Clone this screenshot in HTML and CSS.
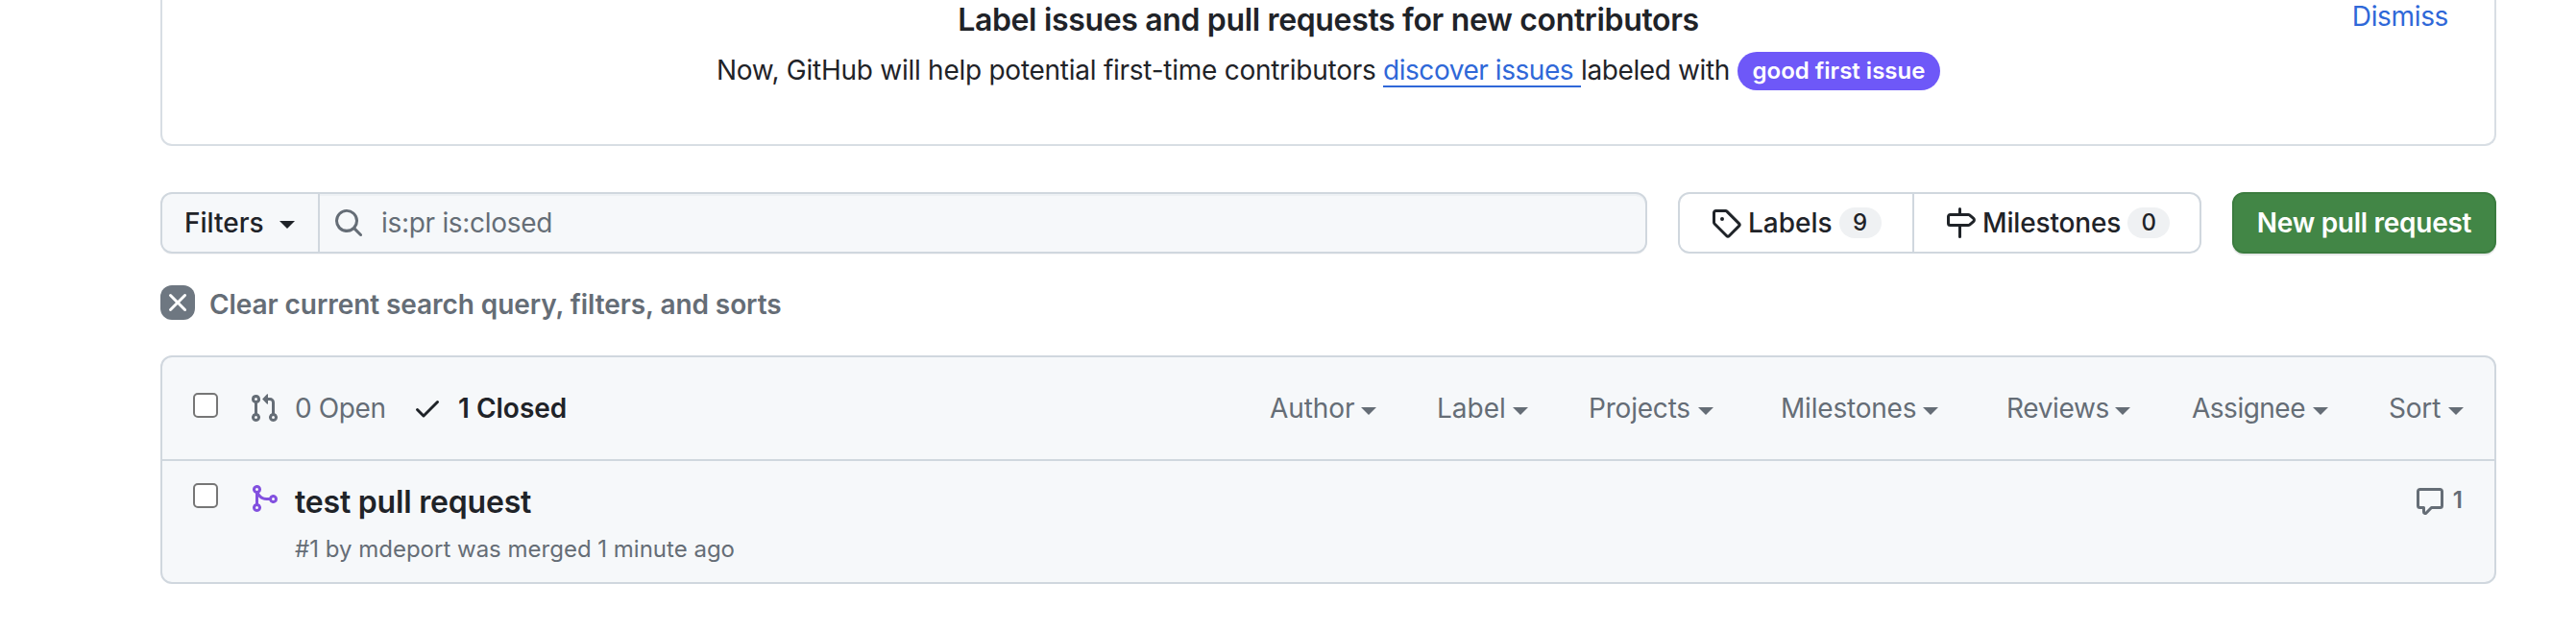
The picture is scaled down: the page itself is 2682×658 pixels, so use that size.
FILE: index.html
```
<!DOCTYPE html>
<html lang="en">
<head>
<meta charset="utf-8">
<title>Pull requests</title>
<link rel="stylesheet" href="styles.css">
</head>
<body>
<main class="page">
  <section class="banner">
    <a class="dismiss">Dismiss</a>
    <h2 class="banner-title">Label issues and pull requests for new contributors</h2>
    <p class="banner-text"><span class="lead">Now, GitHub will help potential first-time contributors</span><a class="link">discover issues </a><span class="labeled">labeled with</span><span class="pill">good first issue</span></p>
  </section>

  <div class="toolbar">
    <div class="search">
      <button class="filters"><span>Filters</span><i class="caret"></i></button>
      <div class="query">
        <svg class="icon" viewBox="0 0 16 16"><path d="M10.68 11.74a6 6 0 0 1-7.922-8.982 6 6 0 0 1 8.982 7.922l3.04 3.04a.749.749 0 0 1-.326 1.275.749.749 0 0 1-.734-.215ZM11.5 7a4.499 4.499 0 1 0-8.997 0A4.499 4.499 0 0 0 11.5 7Z"/></svg>
        <span class="query-text">is:pr is:closed</span>
      </div>
    </div>
    <nav class="subnav">
      <a class="subnav-item labels"><svg class="icon" viewBox="0 0 16 16"><path d="M1 7.775V2.75C1 1.784 1.784 1 2.75 1h5.025c.464 0 .91.184 1.238.513l6.25 6.25a1.75 1.75 0 0 1 0 2.474l-5.026 5.026a1.75 1.75 0 0 1-2.474 0l-6.25-6.25A1.752 1.752 0 0 1 1 7.775Zm1.5 0c0 .066.026.13.073.177l6.25 6.25a.25.25 0 0 0 .354 0l5.025-5.025a.25.25 0 0 0 0-.354l-6.25-6.25a.25.25 0 0 0-.177-.073H2.75a.25.25 0 0 0-.25.25ZM6 5a1 1 0 1 1 0 2 1 1 0 0 1 0-2Z"/></svg><span class="subnav-text">Labels</span><span class="counter">9</span></a>
      <a class="subnav-item milestones"><svg class="icon" viewBox="0 0 16 16"><path d="M7.75 0a.75.75 0 0 1 .75.75V3h3.634c.414 0 .814.147 1.13.414l2.07 1.75a1.75 1.75 0 0 1 0 2.672l-2.07 1.75a1.75 1.75 0 0 1-1.13.414H8.5v5.25a.75.75 0 0 1-1.5 0V10H2.75A1.75 1.75 0 0 1 1 8.25v-3.5C1 3.784 1.784 3 2.75 3H7V.75A.75.75 0 0 1 7.75 0Zm4.384 8.5a.25.25 0 0 0 .161-.06l2.07-1.75a.248.248 0 0 0 0-.38l-2.07-1.75a.25.25 0 0 0-.161-.06H2.75a.25.25 0 0 0-.25.25v3.5c0 .138.112.25.25.25h9.384Z"/></svg><span class="subnav-text">Milestones</span><span class="counter">0</span></a>
    </nav>
    <button class="primary">New pull request</button>
  </div>

  <a class="clear"><span class="clear-icon"><svg class="icon" viewBox="0 0 16 16"><path d="M3.72 3.72a.75.75 0 0 1 1.06 0L8 6.94l3.22-3.22a.749.749 0 0 1 1.275.326.749.749 0 0 1-.215.734L9.06 8l3.22 3.22a.749.749 0 0 1-.326 1.275.749.749 0 0 1-.734-.215L8 9.06l-3.22 3.22a.751.751 0 0 1-1.042-.018.751.751 0 0 1-.018-1.042L6.94 8 3.72 4.78a.75.75 0 0 1 0-1.06Z"/></svg></span><span class="clear-text">Clear current search query, filters, and sorts</span></a>

  <section class="list">
    <header class="list-header">
      <span class="box"></span>
      <a class="state open"><svg class="icon" viewBox="0 0 16 16"><path d="M1.5 3.25a2.25 2.25 0 1 1 3 2.122v5.256a2.251 2.251 0 1 1-1.5 0V5.372A2.25 2.25 0 0 1 1.5 3.25Zm5.677-.177L9.573.677A.25.25 0 0 1 10 .854V2.5h1A2.5 2.5 0 0 1 13.5 5v5.628a2.251 2.251 0 1 1-1.5 0V5a1 1 0 0 0-1-1h-1v1.646a.25.25 0 0 1-.427.177L7.177 3.427a.25.25 0 0 1 0-.354ZM3.75 2.5a.75.75 0 1 0 0 1.5.75.75 0 0 0 0-1.5Zm0 9.5a.75.75 0 1 0 0 1.5.75.75 0 0 0 0-1.5Zm8.25.75a.75.75 0 1 0 1.5 0 .75.75 0 0 0-1.5 0Z"/></svg><span class="state-text">0 Open</span></a>
      <a class="state closed"><svg class="icon" viewBox="0 0 16 16"><path d="M13.78 4.22a.75.75 0 0 1 0 1.06l-7.25 7.25a.75.75 0 0 1-1.06 0L2.22 9.28a.751.751 0 0 1 .018-1.042.751.751 0 0 1 1.042-.018L6 10.94l6.72-6.72a.75.75 0 0 1 1.06 0Z"/></svg><span class="state-text">1 Closed</span></a>
      <nav class="menus">
        <a class="menu author"><span>Author</span><i class="caret"></i></a>
        <a class="menu label"><span>Label</span><i class="caret"></i></a>
        <a class="menu projects"><span>Projects</span><i class="caret"></i></a>
        <a class="menu miles"><span>Milestones</span><i class="caret"></i></a>
        <a class="menu reviews"><span>Reviews</span><i class="caret"></i></a>
        <a class="menu assignee"><span>Assignee</span><i class="caret"></i></a>
        <a class="menu sort"><span>Sort</span><i class="caret"></i></a>
      </nav>
    </header>
    <article class="row">
      <span class="box"></span>
      <svg class="icon merged" viewBox="0 0 16 16"><path d="M5.45 5.154A4.25 4.25 0 0 0 9.25 7.5h1.378a2.251 2.251 0 1 1 0 1.5H9.25A5.734 5.734 0 0 1 5 7.123v3.505a2.25 2.25 0 1 1-1.5 0V5.372a2.25 2.25 0 1 1 1.95-.218ZM4.25 13.5a.75.75 0 1 0 0-1.5.75.75 0 0 0 0 1.5Zm8.5-4.5a.75.75 0 1 0 0-1.5.75.75 0 0 0 0 1.5ZM5 3.25a.75.75 0 1 0 0 .005V3.25Z"/></svg>
      <div class="info">
        <h3 class="title">test pull request</h3>
        <p class="meta">#1 by mdeport was merged 1 minute ago</p>
      </div>
      <a class="comments"><svg class="icon" viewBox="0 0 16 16"><path d="M1 2.75C1 1.784 1.784 1 2.75 1h10.5c.966 0 1.75.784 1.75 1.75v7.5A1.75 1.75 0 0 1 13.25 12H9.06l-2.573 2.573A1.458 1.458 0 0 1 4 13.543V12H2.75A1.75 1.75 0 0 1 1 10.25Zm1.75-.25a.25.25 0 0 0-.25.25v7.5c0 .138.112.25.25.25h2a.75.75 0 0 1 .75.75v2.19l2.72-2.72a.749.749 0 0 1 .53-.22h4.5a.25.25 0 0 0 .25-.25v-7.5a.25.25 0 0 0-.25-.25Z"/></svg><span class="count">1</span></a>
    </article>
  </section>
</main>
</body>
</html>
```
FILE: styles.css
```
* { box-sizing: border-box; }
body {
  margin: 0;
  background: #fff;
  color: #1f2328;
  font: 400 28px/42px Inter, "Liberation Sans", sans-serif;
  white-space: nowrap;
}
h2, h3, p { margin: 0; }
a { color: inherit; text-decoration: none; }
button { margin: 0; font: inherit; color: inherit; }
.page { width: 2432px; margin-left: 167px; display: flex; flex-direction: column; }
.icon { display: block; width: 32px; height: 32px; flex: none; fill: currentColor; }

.banner {
  position: relative;
  height: 152px;
  border: 2px solid #d8dee4;
  border-top: 0;
  border-radius: 0 0 12px 12px;
  text-align: center;
}
.dismiss { position: absolute; top: -4px; right: 48px; color: #2f68d8; letter-spacing: -.35px; }
.banner-title { font-size: 32px; line-height: 42px; font-weight: 600; letter-spacing: -.34px; }
.banner-text { display: flex; padding-left: 577px; height: 42px; margin-top: 10px; letter-spacing: -.26px; }
.lead { width: 694px; text-align: left; }
.link { width: 206px; height: 39px; text-align: left; color: #2f68d8; border-bottom: 2px solid #2f68d8; letter-spacing: -.45px; white-space: pre; }
.labeled { width: 163px; text-align: left; letter-spacing: -.38px; }
.pill { width: 211px; height: 40px; margin-top: 2px; border-radius: 20px; background: #6e58f8; color: #fff; font-size: 24px; line-height: 40px; font-weight: 600; letter-spacing: 0; }

.toolbar { display: flex; height: 64px; margin-top: 48px; }
.search { display: flex; width: 1548px; border: 2px solid #d0d7de; border-radius: 12px; background: #f6f8fa; box-shadow: 0 1px 0 rgba(31,35,40,.04); }
.filters { display: flex; align-items: center; width: 164px; padding: 0 0 0 23px; border: 0; border-right: 2px solid #d0d7de; background: none; font-weight: 500; }
.caret { display: block; width: 0; border: 8px solid transparent; border-bottom: 0; border-top-color: currentColor; }
.filters .caret { margin-left: 16px; margin-top: 4px; }
.query { display: flex; align-items: center; flex: 1; padding-left: 14px; color: #656d76; box-shadow: inset 0 2px 0 rgba(208,215,222,.2); border-radius: 0 10px 10px 0; }
.query-text { margin-left: 18px; letter-spacing: -.3px; }
.subnav { display: flex; width: 545px; margin-left: 32px; border: 2px solid #d0d7de; border-radius: 12px; font-weight: 500; }
.subnav-item { display: flex; align-items: center; padding-left: 32px; }
.labels { width: 244px; border-right: 2px solid #d0d7de; }
.subnav-text { margin-left: 7px; }
.milestones .subnav-text { letter-spacing: -.15px; }
.counter { margin-left: 7px; width: 44px; height: 32px; border-radius: 16px; background: #eff1f3; font-size: 24px; line-height: 32px; text-align: center; }
.primary { width: 275px; margin-left: 32px; padding: 0; border: 2px solid #3b7c3f; border-radius: 12px; background: #428646; color: #fff; font-weight: 600; letter-spacing: -.28px; box-shadow: 0 2px 0 rgba(31,35,40,.1); }

.clear { display: flex; margin-top: 33px; height: 36px; color: #656d76; font-weight: 600; }
.clear-icon { width: 36px; height: 36px; padding: 2px; border-radius: 12px; background: #6e7781; color: #fff; }
.clear-text { margin-left: 15px; line-height: 40px; letter-spacing: -.07px; }

.list { margin-top: 37px; height: 238px; border: 2px solid #d0d7de; border-radius: 12px; background: #f6f8fa; }
.box { width: 26px; height: 26px; flex: none; border: 2px solid #767676; border-radius: 5px; background: #fff; }
.list-header { display: flex; height: 108px; padding: 37px 32px 0; border-bottom: 2px solid #d0d7de; color: #656d76; }
.state { display: flex; }
.state-text { margin-left: 16px; line-height: 32px; }
.open { margin-left: 32px; width: 170px; letter-spacing: -.4px; }
.closed { color: #1f2328; font-weight: 600; }
.menus { display: flex; margin-left: auto; line-height: 32px; }
.menu { display: flex; justify-content: space-between; }
.menu .caret { margin-top: 15px; }
.author { width: 111px; letter-spacing: -.1px; }
.label { width: 95px; margin-left: 63px; }
.projects { width: 130px; margin-left: 63px; letter-spacing: -.2px; }
.miles { width: 164px; margin-left: 70px; letter-spacing: -.2px; }
.reviews { width: 129px; margin-left: 71px; letter-spacing: -.35px; }
.assignee { width: 142px; margin-left: 64px; letter-spacing: -.5px; }
.sort { width: 78px; margin-left: 63px; letter-spacing: -.2px; }
.row { display: flex; padding: 23px 32px 0; }
.merged { margin-left: 32px; color: #8250df; }
.info { margin-left: 16px; }
.title { font-size: 32px; line-height: 40px; font-weight: 600; letter-spacing: -.2px; }
.meta { font-size: 24px; line-height: 36px; color: #656d76; margin-top: 11px; }
.comments { display: flex; margin-left: auto; margin-top: 3px; margin-right: 1px; color: #656d76; font-size: 24px; line-height: 30px; font-weight: 600; }
.count { margin-left: 8px; }
```
